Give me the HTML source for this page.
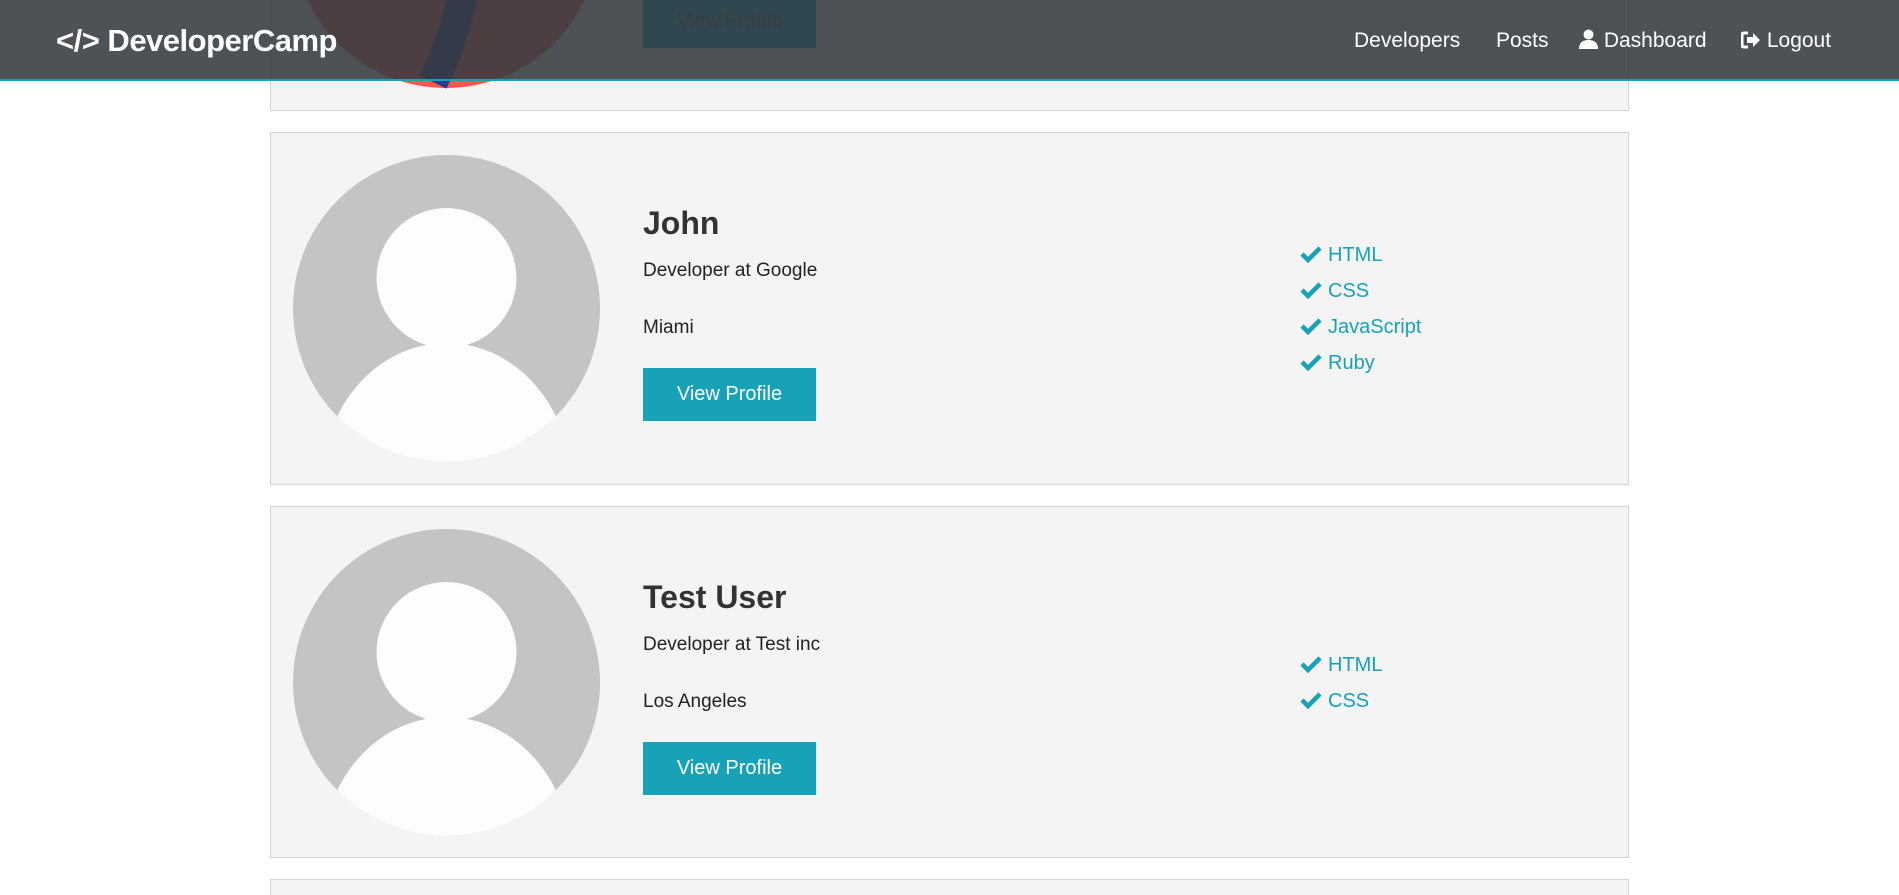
<!DOCTYPE html>
<html style="overflow:hidden;height:895px"><head><meta charset="utf-8"><style>
*{box-sizing:border-box;margin:0;padding:0}
body{width:1899px;height:895px;overflow:hidden;background:#fff;font-family:"Liberation Sans",sans-serif;position:relative;color:#333}
.card{position:absolute;left:270px;width:1359px;background:#f4f4f4;border:1px solid #d4d4d4}
.av{position:absolute;left:22px;top:22px;width:307px;height:307px}
.name{position:absolute;left:372px;font-weight:bold;font-size:32px;color:#333}
.t{position:absolute;left:372px;font-size:19px;color:#222}
.btn{position:absolute;left:372px;width:173px;height:53px;background:#17a2b8;color:#fff;font-size:20px;line-height:53px;text-align:center}
.sk{position:absolute;left:1029px;font-size:20px;color:#17a2b8;line-height:36px}
.sk svg{vertical-align:-2px;margin-right:6px}
nav{position:absolute;left:0;top:0;width:1899px;height:81px;background:rgba(52,58,64,0.88);border-bottom:2px solid #17a2b8;color:#fff}
nav .a{position:absolute;top:29px;font-size:21px}
</style></head><body>

<div class="card" style="top:-250px;height:361px">
 <svg style="position:absolute;left:22px;top:31px" width="307" height="307"><circle cx="153" cy="153" r="153" fill="#f25a4e"/><path d="M150 40 C190 120 180 220 140 300" stroke="#2c3a8c" stroke-width="30" fill="none"/></svg>
 <div class="btn" style="top:244px;color:#555">View Profile</div>
</div>

<div class="card" style="top:132px;height:353px">
 <svg class="av" viewBox="0 0 307 307"><defs><clipPath id="c1"><circle cx="153.5" cy="153.5" r="153.5"/></clipPath></defs><circle cx="153.5" cy="153.5" r="153.5" fill="#c4c4c4"/><g clip-path="url(#c1)" fill="#fdfdfd"><circle cx="153.5" cy="123" r="70"/><ellipse cx="153.5" cy="330" rx="125" ry="142"/></g></svg>
 <div class="name" style="top:72px">John</div>
 <div class="t" style="top:127px">Developer at Google</div>
 <div class="t" style="top:184px">Miami</div>
 <div class="btn" style="top:235px">View Profile</div>
 <div class="sk" style="top:104px">
  <div><svg width="22" height="18" viewBox="0 0 22 18"><path d="M2 9 L8 15 L20 3" stroke="#17a2b8" stroke-width="4.5" fill="none"/></svg>HTML</div>
  <div><svg width="22" height="18" viewBox="0 0 22 18"><path d="M2 9 L8 15 L20 3" stroke="#17a2b8" stroke-width="4.5" fill="none"/></svg>CSS</div>
  <div><svg width="22" height="18" viewBox="0 0 22 18"><path d="M2 9 L8 15 L20 3" stroke="#17a2b8" stroke-width="4.5" fill="none"/></svg>JavaScript</div>
  <div><svg width="22" height="18" viewBox="0 0 22 18"><path d="M2 9 L8 15 L20 3" stroke="#17a2b8" stroke-width="4.5" fill="none"/></svg>Ruby</div>
 </div>
</div>

<div class="card" style="top:506px;height:352px">
 <svg class="av" viewBox="0 0 307 307"><defs><clipPath id="c2"><circle cx="153.5" cy="153.5" r="153.5"/></clipPath></defs><circle cx="153.5" cy="153.5" r="153.5" fill="#c4c4c4"/><g clip-path="url(#c2)" fill="#fdfdfd"><circle cx="153.5" cy="123" r="70"/><ellipse cx="153.5" cy="330" rx="125" ry="142"/></g></svg>
 <div class="name" style="top:72px">Test User</div>
 <div class="t" style="top:127px">Developer at Test inc</div>
 <div class="t" style="top:184px">Los Angeles</div>
 <div class="btn" style="top:235px">View Profile</div>
 <div class="sk" style="top:140px">
  <div><svg width="22" height="18" viewBox="0 0 22 18"><path d="M2 9 L8 15 L20 3" stroke="#17a2b8" stroke-width="4.5" fill="none"/></svg>HTML</div>
  <div><svg width="22" height="18" viewBox="0 0 22 18"><path d="M2 9 L8 15 L20 3" stroke="#17a2b8" stroke-width="4.5" fill="none"/></svg>CSS</div>
 </div>
</div>

<div class="card" style="top:879px;height:16px;border-bottom:none"></div>

<nav>
 <div style="position:absolute;left:56px;top:23px;font-size:31px;font-weight:bold;letter-spacing:-0.5px">&lt;/&gt; DeveloperCamp</div>
 <div class="a" style="left:1354px">Developers</div>
 <div class="a" style="left:1496px">Posts</div>
 <div class="a" style="left:1579px"><svg width="19" height="20" viewBox="0 0 19 20" style="vertical-align:-2px"><circle cx="9.5" cy="5.5" r="5" fill="#fff"/><path d="M0 20 Q0 11 9.5 11 Q19 11 19 20Z" fill="#fff"/></svg> Dashboard</div>
 <div class="a" style="left:1741px"><svg width="20" height="18" viewBox="0 0 20 18" style="vertical-align:-2px"><path d="M7 2 H3 Q1 2 1 4 V14 Q1 16 3 16 H7" stroke="#fff" stroke-width="3" fill="none"/><path d="M6 6 H12 V2 L19 9 L12 16 V12 H6Z" fill="#fff"/></svg> Logout</div>
</nav>
</body></html>
